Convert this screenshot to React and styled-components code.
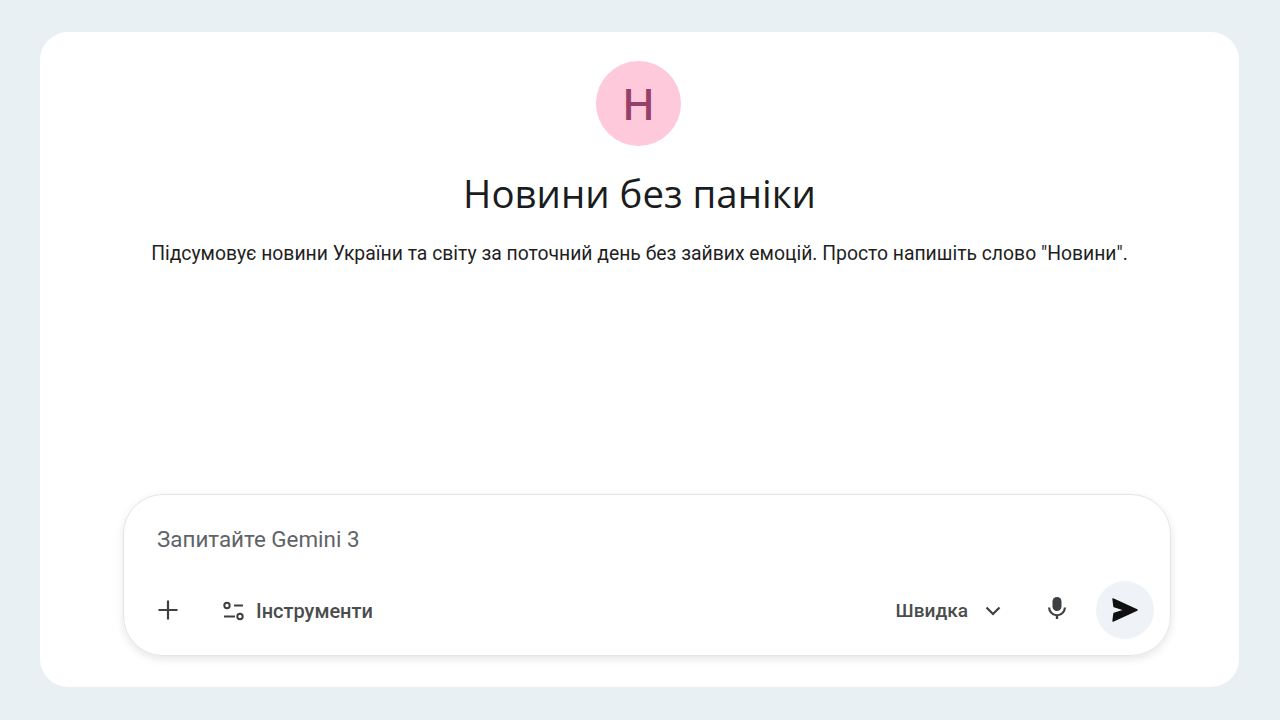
import { createGlobalStyle } from "styled-components";
import styled from "styled-components";

const GlobalStyle = createGlobalStyle`
  html, body {
    margin: 0;
    height: 100%;
    background: #e9f0f4;
    font-family: Roboto, "Noto Sans", sans-serif;
  }
`;

const Page = styled.div`
  box-sizing: border-box;
  width: 1280px;
  height: 720px;
  padding: 32px 41px 33px 40px;
`;

const Card = styled.main`
  box-sizing: border-box;
  height: 100%;
  background: #fff;
  border-radius: 28px;
  display: flex;
  flex-direction: column;
  align-items: center;
  padding-top: 29px;
`;

const Avatar = styled.div`
  width: 85px;
  height: 85px;
  margin-right: 2px;
  border-radius: 50%;
  background: #ffc9dc;
  color: #963f69;
  font-family: "Noto Sans", sans-serif;
  font-weight: 500;
  font-size: 44px;
  line-height: 85px;
  text-align: center;
`;

const Title = styled.h1`
  margin: 21px 0 0;
  font-family: "Open Sans", sans-serif;
  font-weight: 400;
  font-size: 38.4px;
  line-height: 52px;
  color: #1b1c1d;
`;

const Description = styled.p`
  margin: 22px 0 0;
  font-size: 19.35px;
  line-height: 26px;
  color: #1f1f1f;
`;

const Composer = styled.section`
  box-sizing: border-box;
  margin: auto 0 31px 15px;
  width: 1048px;
  height: 162px;
  border: 1px solid #e3e5e7;
  border-radius: 40px;
  box-shadow: 0 3px 9px rgba(0, 0, 0, 0.1);
  padding: 30px 16px 16px 33px;
  display: flex;
  flex-direction: column;
  justify-content: space-between;
`;

const Placeholder = styled.div`
  font-size: 22.4px;
  line-height: 28px;
  color: #5f6368;
`;

const Toolbar = styled.div`
  display: flex;
  align-items: center;
`;

const ToolButton = styled.div`
  display: flex;
  align-items: center;
  gap: ${({ $gap }) => $gap || 0}px;
  margin-left: ${({ $left }) => $left || 0}px;
  padding-top: 1px;
  font-size: ${({ $size }) => $size || 19}px;
  font-weight: 500;
  color: #4a4d4c;
`;

const MicButton = styled.div`
  display: flex;
  margin-left: 46px;
  padding-bottom: 4px;
`;

const Spacer = styled.div`
  flex: 1;
`;

const SendButton = styled.div`
  width: 58px;
  height: 58px;
  margin-left: 29px;
  border-radius: 50%;
  background: #eff3f8;
  display: flex;
  align-items: center;
  justify-content: center;
`;

const PlusIcon = () => (
  <svg width="22" height="22" viewBox="0 0 22 22" fill="none" stroke="#3c4043" strokeWidth="2.2">
    <path d="M11 1.5v19M1.5 11h19" />
  </svg>
);

const ToolsIcon = () => (
  <svg width="24" height="24" viewBox="0 0 24 24" fill="none" stroke="#3c4043" strokeWidth="2">
    <circle cx="6" cy="6.500" r="2.7" />
    <path d="M13 6.500h9M3 17.500h11" />
    <circle cx="19" cy="17.500" r="2.7" />
  </svg>
);

const ChevronIcon = () => (
  <svg width="16" height="12" viewBox="0 0 16 12" fill="none" stroke="#3c4043" strokeWidth="2.2">
    <path d="M1.500 2.500 8 9l6.500-6.500" />
  </svg>
);

const MicIcon = () => (
  <svg width="20" height="24" viewBox="0 0 20 24" fill="#3c4043">
    <rect x="5.500" y="1" width="9" height="14" rx="4.500" />
    <path d="M1 11.500h2.200a6.800 6.800 0 0 0 13.600 0H19a9 9 0 0 1-7.800 8.600V23H8.800v-2.900A9 9 0 0 1 1 11.500z" />
  </svg>
);

const SendIcon = () => (
  <svg width="26" height="24" viewBox="0 0 26 24" fill="#111" stroke="#111" strokeWidth="1.400" strokeLinejoin="round">
    <path d="M1 1 25 12 1 23l1-7.500L13 12 2 8.500z" />
  </svg>
);

export default function App() {
  return (
    <>
      <GlobalStyle />
      <Page>
        <Card>
          <Avatar>Н</Avatar>
          <Title>Новини без паніки</Title>
          <Description>
            Підсумовує новини України та світу за поточний день без зайвих
            емоцій. Просто напишіть слово "Новини".
          </Description>
          <Composer>
            <Placeholder>Запитайте Gemini 3</Placeholder>
            <Toolbar>
              <PlusIcon />
              <ToolButton $left={42} $gap={11} $size={20}>
                <ToolsIcon />
                Інструменти
              </ToolButton>
              <Spacer />
              <ToolButton $gap={17} $size={19.1}>
                Швидка
                <ChevronIcon />
              </ToolButton>
              <MicButton>
                <MicIcon />
              </MicButton>
              <SendButton>
                <SendIcon />
              </SendButton>
            </Toolbar>
          </Composer>
        </Card>
      </Page>
    </>
  );
}
